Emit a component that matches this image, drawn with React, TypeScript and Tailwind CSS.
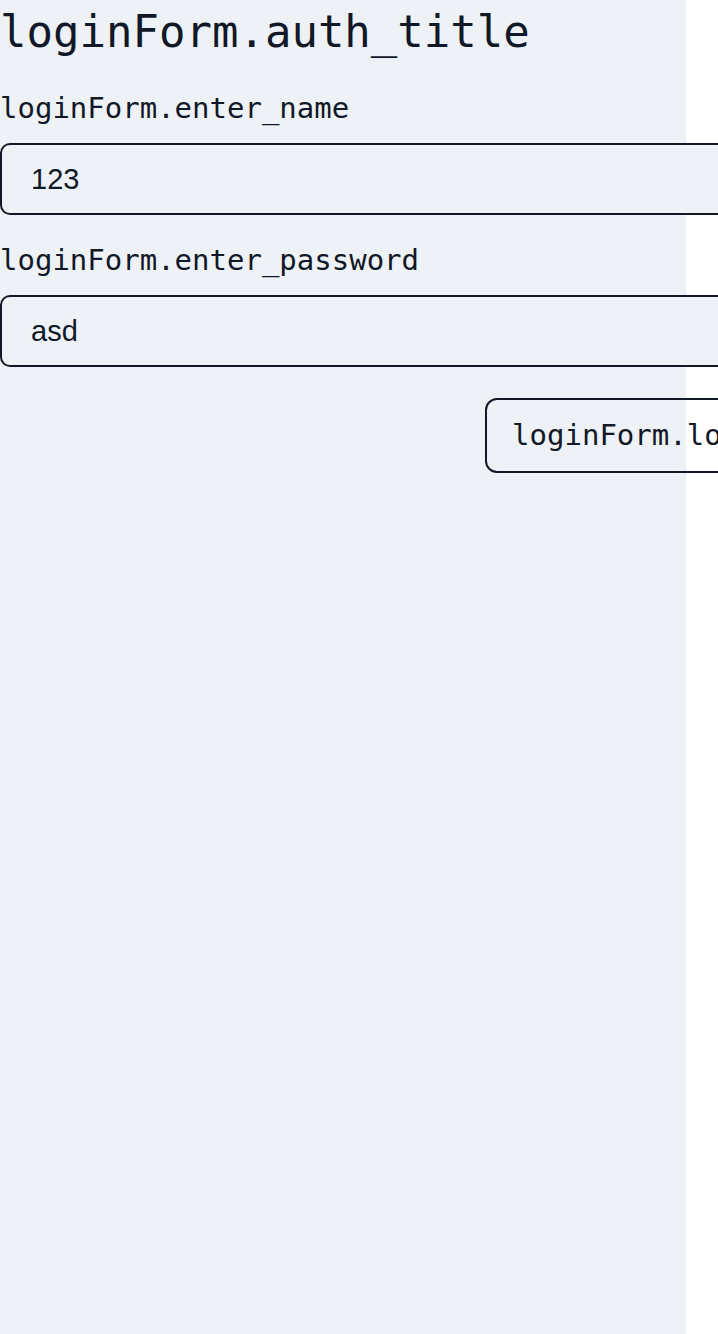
import { useState } from 'react';

const mono = { fontFamily: '"DejaVu Sans Mono", "Liberation Mono", monospace' };

export default function App() {
  const [name, setName] = useState('123');
  const [password, setPassword] = useState('asd');

  return (
    <div className="flex min-h-screen bg-white text-[#111827]">
      <div className="w-[686px] shrink-0 bg-[#eef1f6] pt-[6px]">
        <h1 className="text-[44px] leading-[52px] whitespace-nowrap font-['DejaVu_Sans_Mono',monospace]">loginForm.auth_title</h1>

        <form className="flex flex-col w-[801px]" onSubmit={(e) => e.preventDefault()}>
          <label className="mt-[33px] text-[29px] leading-[34px] whitespace-nowrap font-['DejaVu_Sans_Mono',monospace]">loginForm.enter_name</label>
          <input
            type="text"
            value={name}
            onChange={(e) => setName(e.target.value)}
            className="mt-[18px] h-[72px] w-full rounded-[10px] border-2 border-[#111827] bg-[#eef1f6] pl-[29px] text-[29px] font-['Liberation_Sans',Arial,sans-serif] outline-none"
          />

          <label className="mt-[28px] text-[29px] leading-[34px] whitespace-nowrap font-['DejaVu_Sans_Mono',monospace]">loginForm.enter_password</label>
          <input
            type="text"
            value={password}
            onChange={(e) => setPassword(e.target.value)}
            className="mt-[18px] h-[72px] w-full rounded-[10px] border-2 border-[#111827] bg-[#eef1f6] pl-[29px] text-[29px] font-['Liberation_Sans',Arial,sans-serif] outline-none"
          />

          <div className="mt-[31px] flex justify-end">
            <button
              type="submit"
              style={mono}
              className="rounded-[12px] border-2 border-[#111827] bg-transparent px-[25px] py-[18px] text-[29px] leading-[35px] whitespace-nowrap"
            >
              loginForm.login
            </button>
          </div>
        </form>
      </div>
    </div>
  );
}
